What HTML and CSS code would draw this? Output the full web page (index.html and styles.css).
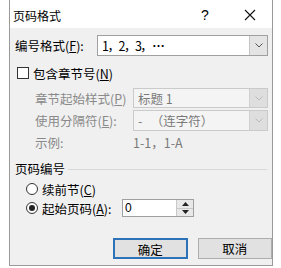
FILE: index.html
```html
<!DOCTYPE html>
<html lang="zh-CN">
<head>
<meta charset="utf-8">
<link rel="stylesheet" href="styles.css">
</head>
<body>
<div class="dialog">
  <div class="titlebar">
    <span class="title">页码格式</span>
    <span class="help">?</span>
    <span class="close"><svg width="12" height="12" viewBox="0 0 12 12"><path d="M1 1L11 11M11 1L1 11" stroke="#111" stroke-width="1.1" fill="none"/></svg></span>
  </div>
  <div class="body">
    <div class="row r-format">
      <span class="lbl-main">编号格式(<u>F</u>):</span>
      <div class="combo combo-main">
        <span class="val"><span class="nums">1，2，3，</span><span class="dots">⋯</span></span>
        <span class="drop"><svg width="8" height="5" viewBox="0 0 8 5"><path d="M0.5 0.5L4 4L7.5 0.5" stroke="#555" stroke-width="1" fill="none"/></svg></span>
      </div>
    </div>
    <div class="row r-check">
      <span class="checkbox"></span>
      <span class="chk-lbl">包含章节号(<u>N</u>)</span>
    </div>
    <div class="row r-sub1">
      <span class="lbl-sub">章节起始样式(<u>P</u>)</span>
      <div class="combo combo-dis">
        <span class="val">标题 1</span>
        <span class="drop"><svg width="8" height="5" viewBox="0 0 8 5"><path d="M0.5 0.5L4 4L7.5 0.5" stroke="#bbb" stroke-width="1" fill="none"/></svg></span>
      </div>
    </div>
    <div class="row r-sub2">
      <span class="lbl-sub">使用分隔符(<u>E</u>):</span>
      <div class="combo combo-dis">
        <span class="val">-&nbsp;&nbsp;&nbsp;（连字符）</span>
        <span class="drop"><svg width="8" height="5" viewBox="0 0 8 5"><path d="M0.5 0.5L4 4L7.5 0.5" stroke="#bbb" stroke-width="1" fill="none"/></svg></span>
      </div>
    </div>
    <div class="row r-example">
      <span class="lbl-sub">示例:</span>
      <span class="example">1-1，1-A</span>
    </div>
    <div class="row r-group">
      <span class="group-title">页码编号</span>
      <span class="group-line"></span>
    </div>
    <div class="row r-radio1">
      <span class="radio"></span>
      <span class="radio-lbl">续前节(<u>C</u>)</span>
    </div>
    <div class="row r-radio2">
      <span class="radio checked"></span>
      <span class="radio-lbl lbl-start">起始页码(<u>A</u>):</span>
      <div class="spin">
        <span class="spin-val">0</span>
        <span class="spin-btns">
          <span class="spin-btn"><svg width="7" height="4" viewBox="0 0 7 4"><path d="M0 4L3.5 0L7 4Z" fill="#222"/></svg></span>
          <span class="spin-btn"><svg width="7" height="4" viewBox="0 0 7 4"><path d="M0 0L3.5 4L7 0Z" fill="#222"/></svg></span>
        </span>
      </div>
    </div>
    <div class="row r-buttons">
      <button class="btn btn-ok">确定</button>
      <button class="btn">取消</button>
    </div>
  </div>
</div>
</body>
</html>
```
FILE: styles.css
```css
html, body {
  margin: 0;
  padding: 0;
  background: #fff;
}
body {
  font-family: "Noto Sans CJK SC", "Noto Sans", sans-serif;
  font-size: 12.5px;
  color: #000;
}
.dialog {
  margin-left: 9px;
  width: 264px;
  height: 266px;
  box-sizing: border-box;
  border: 1px solid #9a9a9a;
  border-top: none;
  background: #f0f0f0;
  display: flex;
  flex-direction: column;
}
.titlebar {
  height: 28px;
  background: #fff;
  display: flex;
  align-items: center;
  padding-top: 2px;
  box-sizing: border-box;
}
.title {
  padding-left: 3px;
  font-size: 12px;
}
.help {
  margin-left: auto;
  width: 46px;
  text-align: center;
  font-family: "Liberation Sans", sans-serif;
  font-size: 14px;
}
.close {
  width: 44px;
  display: flex;
  justify-content: center;
  align-items: center;
}
.body {
  padding-left: 5px;
}
.row {
  display: flex;
  align-items: center;
}
.r-format { margin-top: 7px; height: 21px; }
.lbl-main { width: 82px; }
.combo {
  box-sizing: border-box;
  display: flex;
  align-items: stretch;
  border: 1px solid #a0a0a0;
  background: #fff;
}
.combo .val {
  flex: 1;
  display: flex;
  align-items: center;
  padding-left: 4px;
  white-space: pre;
}
.nums { letter-spacing: -1.5px; }
.dots { font-weight: bold; margin-left: 1px; }
.combo .drop {
  width: 17px;
  display: flex;
  align-items: center;
  justify-content: center;
  background: #e4e4e4;
  border-left: 1px solid #c4c4c4;
}
.combo-main {
  width: 171px;
  height: 21px;
}
.r-check { margin-top: 10px; height: 14px; }
.checkbox {
  margin-left: 2px;
  width: 12px;
  height: 12px;
  box-sizing: border-box;
  border: 1px solid #333;
  background: #fff;
}
.chk-lbl { margin-left: 4px; }
.r-sub1 { margin-top: 8px; height: 20px; }
.r-sub2 { margin-top: 2px; height: 21px; }
.lbl-sub {
  margin-left: 20px;
  width: 98px;
  flex: none;
  color: #8a8a8a;
}
.combo-dis {
  width: 135px;
  height: 100%;
  border-color: #cacaca;
  background: #f4f4f4;
  color: #7a7a7a;
}
.combo-dis .drop {
  background: #dedede;
  border-left-color: #d0d0d0;
}
.r-example { margin-top: 4px; height: 14px; }
.example { color: #7a7a7a; }
.r-group { margin-top: 12px; height: 15px; }
.group-line {
  margin-left: 3px;
  width: 199px;
  height: 1px;
  background: #d9d9d9;
  margin-top: 2px;
}
.r-radio1 { margin-top: 6px; height: 14px; }
.radio {
  margin-left: 11px;
  width: 12px;
  height: 12px;
  box-sizing: border-box;
  border: 1px solid #333;
  border-radius: 50%;
  background: #fff;
  display: flex;
  align-items: center;
  justify-content: center;
}
.radio.checked::after {
  content: "";
  width: 6px;
  height: 6px;
  border-radius: 50%;
  background: #222;
}
.radio-lbl { margin-left: 4px; }
.r-radio2 { margin-top: 3px; height: 18px; }
.lbl-start { width: 80px; }
.spin {
  width: 72px;
  height: 18px;
  box-sizing: border-box;
  border: 1px solid #a0a0a0;
  background: #fff;
  display: flex;
}
.spin-val {
  flex: 1;
  display: flex;
  align-items: center;
  padding-left: 2px;
  font-family: "Liberation Sans", sans-serif;
  font-size: 12px;
}
.spin-btns {
  width: 16px;
  display: flex;
  flex-direction: column;
  border-left: 1px solid #c8c8c8;
}
.spin-btn {
  flex: 1;
  display: flex;
  align-items: center;
  justify-content: center;
  background: #e8e8e8;
}
.spin-btn + .spin-btn { border-top: 1px solid #c8c8c8; }
.r-buttons {
  margin-top: 21px;
  height: 21px;
  padding-left: 98px;
  gap: 10px;
}
.btn {
  width: 75px;
  height: 21px;
  margin: 0;
  padding: 0;
  box-sizing: border-box;
  border: 1px solid #adadad;
  background: #e1e1e1;
  font-family: "Noto Sans CJK SC", sans-serif;
  font-size: 12.5px;
  color: #000;
}
.btn-ok {
  border: 2px solid #2c72b8;
}
```
